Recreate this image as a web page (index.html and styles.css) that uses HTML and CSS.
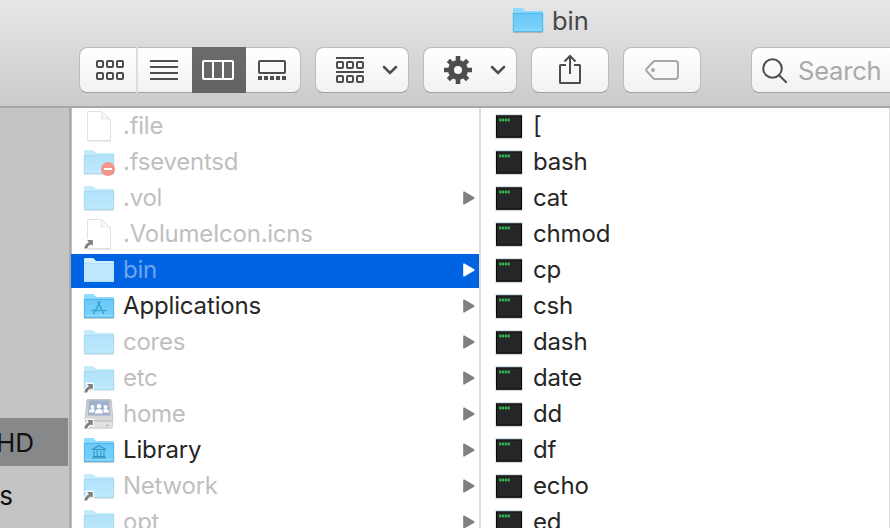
FILE: index.html
```
<!DOCTYPE html>
<html lang="en">
<head>
<meta charset="utf-8">
<title>bin</title>
<link rel="stylesheet" href="styles.css">
</head>
<body>
<svg class="defs" width="0" height="0" aria-hidden="true">
  <defs>
    <linearGradient id="front" x1="0" y1="0" x2="0" y2="1"><stop offset="0" stop-color="#67c8f8"/><stop offset="1" stop-color="#7dd3fb"/></linearGradient>
    <linearGradient id="drive" x1="0" y1="0" x2="0" y2="1"><stop offset="0" stop-color="#a9adb3"/><stop offset="1" stop-color="#cfcfcf"/></linearGradient>
    <symbol id="folder" viewBox="0 0 32 32">
      <path d="M1 28.4h30" stroke="#000" stroke-opacity=".22"/>
      <path d="M1 27.5V5.2Q1 4 2.2 4h7.3q1 0 1.6.8l1.5 1.7q.5.5 1.3.5H30q1 0 1 1v19.5z" fill="#8ddbfd"/>
      <path d="M1 9h30v18.5q0 .5-.5.5h-29q-.5 0-.5-.5z" fill="url(#front)"/>
      <path d="M1 9.3h30M1.3 9v18.3M30.7 9v18.3M1 27.5h30" stroke="#45addf" stroke-width=".7" fill="none"/>
      <path d="M2 25.3h28" stroke="#98e0ff" stroke-width=".7"/>
    </symbol>
    <symbol id="folder-selected" viewBox="0 0 32 32">
      <path d="M1 27.5V5.2Q1 4 2.200 4h7.300q1 0 1.600.8l1.500 1.700q.5.500 1.300.5H30q1 0 1 1v19.500z" fill="#d3effe"/>
      <path d="M1 9h30v18.500q0 .5-.5.500h-29q-.5 0-.5-.5z" fill="#bfe7fc"/>
      <path d="M1 9.300h30M1 27.500h30" stroke="#a8d9f5" stroke-width=".7"/>
    </symbol>
    <symbol id="document" viewBox="0 0 32 32">
      <path d="M4.500 1.500h14l9 8.500v20.500h-23z" fill="#fff" stroke="#c6c6c6"/>
      <path d="M4 31.200h24" stroke="#aaa" stroke-width=".6"/>
      <path d="M18.500 1.500q1 5-.4 7.200 6-1 9.400 1.300z" fill="#f5f5f5" stroke="#c2c2c2" stroke-width=".8"/>
    </symbol>
    <symbol id="alias" viewBox="0 0 12 12">
      <path d="M3 .9h8.300v8.300L8.800 7.100Q5.800 8.100 4.800 11.500H.7Q1 6.500 5.600 3.900z" fill="#808080" stroke="#fff" stroke-width="1.200"/>
    </symbol>
    <symbol id="server" viewBox="0 0 32 32">
      <path d="M5 1.500h22q1 0 1.200 1l1.800 20H2l1.800-20q.2-1 1.200-1z" fill="url(#drive)" stroke="#aaa" stroke-width=".8"/>
      <path d="M2.500 23.500h27v5q0 1.700-1.700 1.700H4.200q-1.700 0-1.700-1.700z" fill="#d8d8d8" stroke="#b0b0b0" stroke-width=".8"/>
      <path d="M6.500 2.500h19l1.700 15H4.800z" fill="#7f97bd"/>
      <g fill="#fff"><circle cx="9.500" cy="9" r="1.900"/><circle cx="22.500" cy="9" r="1.900"/><circle cx="16" cy="8.200" r="2.200"/><path d="M6 14.500q0-3.500 3.500-3.500 2 0 2.500 1-1 1-1 2.500zM12 15.500q0-4.500 4-4.500t4 4.500zM21 14.500q0-1.500-1-2.500.5-1 2.500-1 3.500 0 3.500 3.500z"/></g>
      <circle cx="24.500" cy="27.500" r="1.200" fill="#81c47d"/>
    </symbol>
    <symbol id="apps" viewBox="0 0 16 14">
      <path d="M7 1l5.500 11.500M9 1L3.500 11M1 9.500h8M12 9.500h3M2.500 12.500l.5-.8" stroke="#3ba0d3" stroke-width="1.500" stroke-linecap="round" fill="none"/>
    </symbol>
    <symbol id="library" viewBox="0 0 16 14">
      <path d="M1 4.500L8 .7l7 3.800zM3 5.500v6M6.200 5.500v6M9.800 5.500v6M13 5.500v6M1 12.800h14M2 11.500h12" stroke="#3295c8" stroke-width="1.150" fill="none"/>
    </symbol>
    <symbol id="exec" viewBox="0 0 28 26">
      <rect x=".5" y="1" width="27" height="24" fill="#999" opacity=".45"/>
      <rect x=".5" y=".3" width="27" height="1" fill="#b9d4e1"/>
      <rect x="1" y="1.300" width="26" height="22.500" fill="#050505"/>
      <rect x="2" y="2.300" width="24" height="20.200" fill="#262626"/>
      <path d="M4 6h11" stroke="#1f6b33" stroke-width="2.600"/>
      <path d="M4.200 6h11" stroke="#36b555" stroke-width="2.600" stroke-dasharray="1.900 1"/>
    </symbol>
    <symbol id="more" viewBox="0 0 12 14"><path d="M.2.800q.4-.6 1.200-.2l9.800 5.600q.9.800 0 1.600L1.400 13.400q-.8.400-1.200-.2z" fill="currentColor"/></symbol>
    <symbol id="chevron" viewBox="0 0 16 10"><path d="M2 2l6 6 6-6" fill="none" stroke="#4d4d4d" stroke-width="2.500" stroke-linecap="round" stroke-linejoin="miter"/></symbol>
  </defs>
</svg>
<div class="window">
  <header class="chrome">
    <div class="title"><svg class="icon"><use href="#folder"/></svg><h1>bin</h1></div>
    <div class="toolbar">
      <div class="views">
        <span class="seg first"><svg width="28" height="20" fill="none" stroke="#4d4d4d" stroke-width="2"><rect x="1" y="1" width="6" height="6" rx="1"/><rect x="11" y="1" width="6" height="6" rx="1"/><rect x="21" y="1" width="6" height="6" rx="1"/><rect x="1" y="13" width="6" height="6" rx="1"/><rect x="11" y="13" width="6" height="6" rx="1"/><rect x="21" y="13" width="6" height="6" rx="1"/></svg></span>
        <span class="seg"><svg width="28" height="20" stroke="#4d4d4d" stroke-width="2"><path d="M0 1h28M0 7h28M0 13h28M0 19h28"/></svg></span>
        <span class="seg active"><svg width="32" height="20" fill="none" stroke="#fff" stroke-width="2"><rect x="1" y="1" width="30" height="18" rx="1"/><path d="M11 1v18M21 1v18"/></svg></span>
        <span class="seg"><svg width="28" height="20"><rect x="1" y="1" width="26" height="12" rx="1" fill="none" stroke="#4d4d4d" stroke-width="2"/><path d="M0 18h28" stroke="#4d4d4d" stroke-width="4" stroke-dasharray="4 2"/></svg></span>
      </div>
      <div class="button group"><svg width="28" height="26" fill="none" stroke="#4d4d4d" stroke-width="2"><path d="M0 1h28M0 15h28"/><rect x="1" y="5" width="6" height="6" rx="1"/><rect x="11" y="5" width="6" height="6" rx="1"/><rect x="21" y="5" width="6" height="6" rx="1"/><rect x="1" y="19" width="6" height="6" rx="1"/><rect x="11" y="19" width="6" height="6" rx="1"/><rect x="21" y="19" width="6" height="6" rx="1"/></svg><svg class="chevron"><use href="#chevron"/></svg></div>
      <div class="button group"><svg width="28" height="28" viewBox="-14 -14 28 28"><circle r="7" fill="none" stroke="#4d4d4d" stroke-width="6"/><g stroke="#4d4d4d" stroke-width="4.600"><path d="M0-14v6M0 14v-6M-14 0h6M14 0h-6"/><path d="M-9.600-9.600l4 4M9.600 9.600l-4-4M9.600-9.600l-4 4M-9.600 9.600l4-4"/></g></svg><svg class="chevron"><use href="#chevron"/></svg></div>
      <div class="button"><svg class="share" width="24" height="32" fill="none" stroke="#4d4d4d" stroke-width="2"><path d="M8 12H2.500Q2 12 2 12.500v17q0 .5.500.5h19q.5 0 .5-.5v-17q0-.5-.5-.5H16M12 21V3M6.500 8.500L12 3l5.500 5.500"/></svg></div>
      <div class="button"><svg width="34" height="20"><path d="M10 1h20q3 0 3 3v12q0 3-3 3H10q-1 0-2-1L2 11.500q-1.500-1.500 0-3L8 2q1-1 2-1z" fill="none" stroke="#a7a7a7" stroke-width="2"/><circle cx="8" cy="10" r="2" fill="#a7a7a7"/></svg></div>
      <div class="search"><svg width="26" height="26" fill="none" stroke="#4d4d4d" stroke-width="2"><circle cx="10.500" cy="10.500" r="9.300"/><path d="M17.200 17.200l7.500 7.500"/></svg><span>Search</span></div>
    </div>
  </header>
  <div class="body">
    <aside class="sidebar"><div class="place selected"><span>HD</span></div><div class="place"><span>s</span></div></aside>
    <main class="column parent">
      <div class="row dim"><span class="art"><svg class="icon"><use href="#document"/></svg></span><span class="name">.file</span></div>
      <div class="row dim"><span class="art"><svg class="icon"><use href="#folder"/></svg><i class="denied"></i></span><span class="name">.fseventsd</span></div>
      <div class="row dim"><span class="art"><svg class="icon"><use href="#folder"/></svg></span><span class="name">.vol</span><svg class="more"><use href="#more"/></svg></div>
      <div class="row dim"><span class="art"><svg class="icon"><use href="#document"/></svg><svg class="alias"><use href="#alias"/></svg></span><span class="name">.VolumeIcon.icns</span></div>
      <div class="row dim current"><span class="art"><svg class="icon"><use href="#folder-selected"/></svg></span><span class="name">bin</span><svg class="more"><use href="#more"/></svg></div>
      <div class="row"><span class="art"><svg class="icon"><use href="#folder"/></svg><svg class="emblem"><use href="#apps"/></svg></span><span class="name">Applications</span><svg class="more"><use href="#more"/></svg></div>
      <div class="row dim"><span class="art"><svg class="icon"><use href="#folder"/></svg></span><span class="name">cores</span><svg class="more"><use href="#more"/></svg></div>
      <div class="row dim"><span class="art"><svg class="icon"><use href="#folder"/></svg><svg class="alias"><use href="#alias"/></svg></span><span class="name">etc</span><svg class="more"><use href="#more"/></svg></div>
      <div class="row dim"><span class="art"><svg class="icon server"><use href="#server"/></svg><svg class="alias"><use href="#alias"/></svg></span><span class="name">home</span><svg class="more"><use href="#more"/></svg></div>
      <div class="row"><span class="art"><svg class="icon"><use href="#folder"/></svg><svg class="emblem"><use href="#library"/></svg></span><span class="name">Library</span><svg class="more"><use href="#more"/></svg></div>
      <div class="row dim"><span class="art"><svg class="icon"><use href="#folder"/></svg><svg class="alias"><use href="#alias"/></svg></span><span class="name">Network</span><svg class="more"><use href="#more"/></svg></div>
      <div class="row dim"><span class="art"><svg class="icon"><use href="#folder"/></svg></span><span class="name">opt</span><svg class="more"><use href="#more"/></svg></div>
    </main>
    <section class="column files">
      <div class="row"><svg class="exec"><use href="#exec"/></svg><span class="name">[</span></div>
      <div class="row"><svg class="exec"><use href="#exec"/></svg><span class="name">bash</span></div>
      <div class="row"><svg class="exec"><use href="#exec"/></svg><span class="name">cat</span></div>
      <div class="row"><svg class="exec"><use href="#exec"/></svg><span class="name">chmod</span></div>
      <div class="row"><svg class="exec"><use href="#exec"/></svg><span class="name">cp</span></div>
      <div class="row"><svg class="exec"><use href="#exec"/></svg><span class="name">csh</span></div>
      <div class="row"><svg class="exec"><use href="#exec"/></svg><span class="name">dash</span></div>
      <div class="row"><svg class="exec"><use href="#exec"/></svg><span class="name">date</span></div>
      <div class="row"><svg class="exec"><use href="#exec"/></svg><span class="name">dd</span></div>
      <div class="row"><svg class="exec"><use href="#exec"/></svg><span class="name">df</span></div>
      <div class="row"><svg class="exec"><use href="#exec"/></svg><span class="name">echo</span></div>
      <div class="row"><svg class="exec"><use href="#exec"/></svg><span class="name">ed</span></div>
    </section>
  </div>
</div>
</body>
</html>
```
FILE: styles.css
```
* { box-sizing: border-box; }
html, body { margin: 0; height: 100%; overflow: hidden; }
body { font-family: Inter, "Liberation Sans", sans-serif; font-size: 24px; color: #262626; background: #fff; }
svg { display: block; flex: none; }
.defs { position: absolute; }
.window { width: 890px; height: 528px; overflow: hidden; display: flex; flex-direction: column; }

.chrome { height: 108px; flex: none; background: linear-gradient(#e6e6e6, #cbcbcb); border-bottom: 2px solid #a7a7a7; }
.title { display: flex; align-items: center; height: 47px; padding: 0 0 6px 512px; }
.title .icon { width: 32px; height: 32px; margin-bottom: 1px; }
.title h1 { margin: 0 0 0 8px; font-size: 25.500px; font-weight: 400; color: #474747; line-height: 40px; }
.toolbar { display: flex; height: 46px; padding-left: 79px; }
.views, .button, .search { height: 46px; flex: none; border: 1px solid #bcbcbc; border-bottom-color: #a3a3a3; border-radius: 8px; background: linear-gradient(#fff, #f2f2f2); display: flex; align-items: center; background-clip: padding-box; }
.views { width: 222px; margin-right: 14px; }
.seg { width: 54px; height: 46px; flex: none; display: flex; align-items: center; justify-content: center; padding-right: 2px; }
.seg.first { width: 58px; border-right: 2px solid #ddd; padding: 0 0 0 4px; }
.seg.active { background: linear-gradient(#6b6b6b, #636363); }
.button { width: 78px; margin-right: 14px; justify-content: center; }
.button.group { width: 94px; justify-content: space-between; padding: 0 10px 0 20px; }
.chevron { width: 16px; height: 10px; }
.share { margin-bottom: 2px; }
.search { width: 160px; margin-left: 36px; padding-left: 10px; gap: 10px; color: #a9a9a9; font-size: 25.500px; letter-spacing: -.2px; }
.search svg { margin-top: 2px; }

.body { display: flex; flex: 1; min-height: 0; }
.sidebar { width: 71px; flex: none; background: #c4c4c4; border-right: 2px solid #aaa; padding-top: 310px; color: #111; overflow: hidden; }
.place { width: 68px; height: 48px; display: flex; align-items: center; justify-content: flex-end; padding-right: 34px; font-size: 26px; margin-bottom: 5px; }
.place.selected { background: #87888a; }
.place:not(.selected) { padding-right: 55px; }

.column { flex: none; overflow: hidden; }
.parent { width: 410px; border-right: 2px solid #dfdfdf; box-shadow: inset 1px 0 #bdbdbd; }
.files { width: 409px; border-right: 1px solid #d8d8d8; }
.row { height: 34px; margin-top: 2px; display: flex; align-items: center; line-height: 34px; white-space: nowrap; }
.parent .row { padding: 0 4px 0 12px; }
.files .row { padding-left: 14px; }
.art { position: relative; width: 32px; height: 32px; flex: none; margin-bottom: 2px; }
.icon { width: 32px; height: 32px; }
.name { margin: -2px auto 0 8px; letter-spacing: -.15px; }
.files .name { margin-left: 10px; }
.exec { width: 28px; height: 26px; }
.dim .icon { opacity: .5; }
.dim .icon.server { opacity: .75; }
.dim .name { color: #bfbfbf; letter-spacing: -.25px; }
.more { width: 12px; height: 14px; color: #808080; margin-bottom: 2px; }
.row.current { background: #0063e1; }
.current .name { color: #6fa3ef; }
.current .more { color: #fff; }
.dim.current .icon { opacity: 1; }
.alias { position: absolute; left: 0; bottom: 0; width: 11px; height: 12px; }
.emblem { position: absolute; left: 8px; top: 11px; width: 16px; height: 14px; }
.denied { position: absolute; left: 18px; top: 16px; width: 14px; height: 14px; border-radius: 50%; background: linear-gradient(#fff, #fff) center / 8px 2px no-repeat, #f3958a; }
```
